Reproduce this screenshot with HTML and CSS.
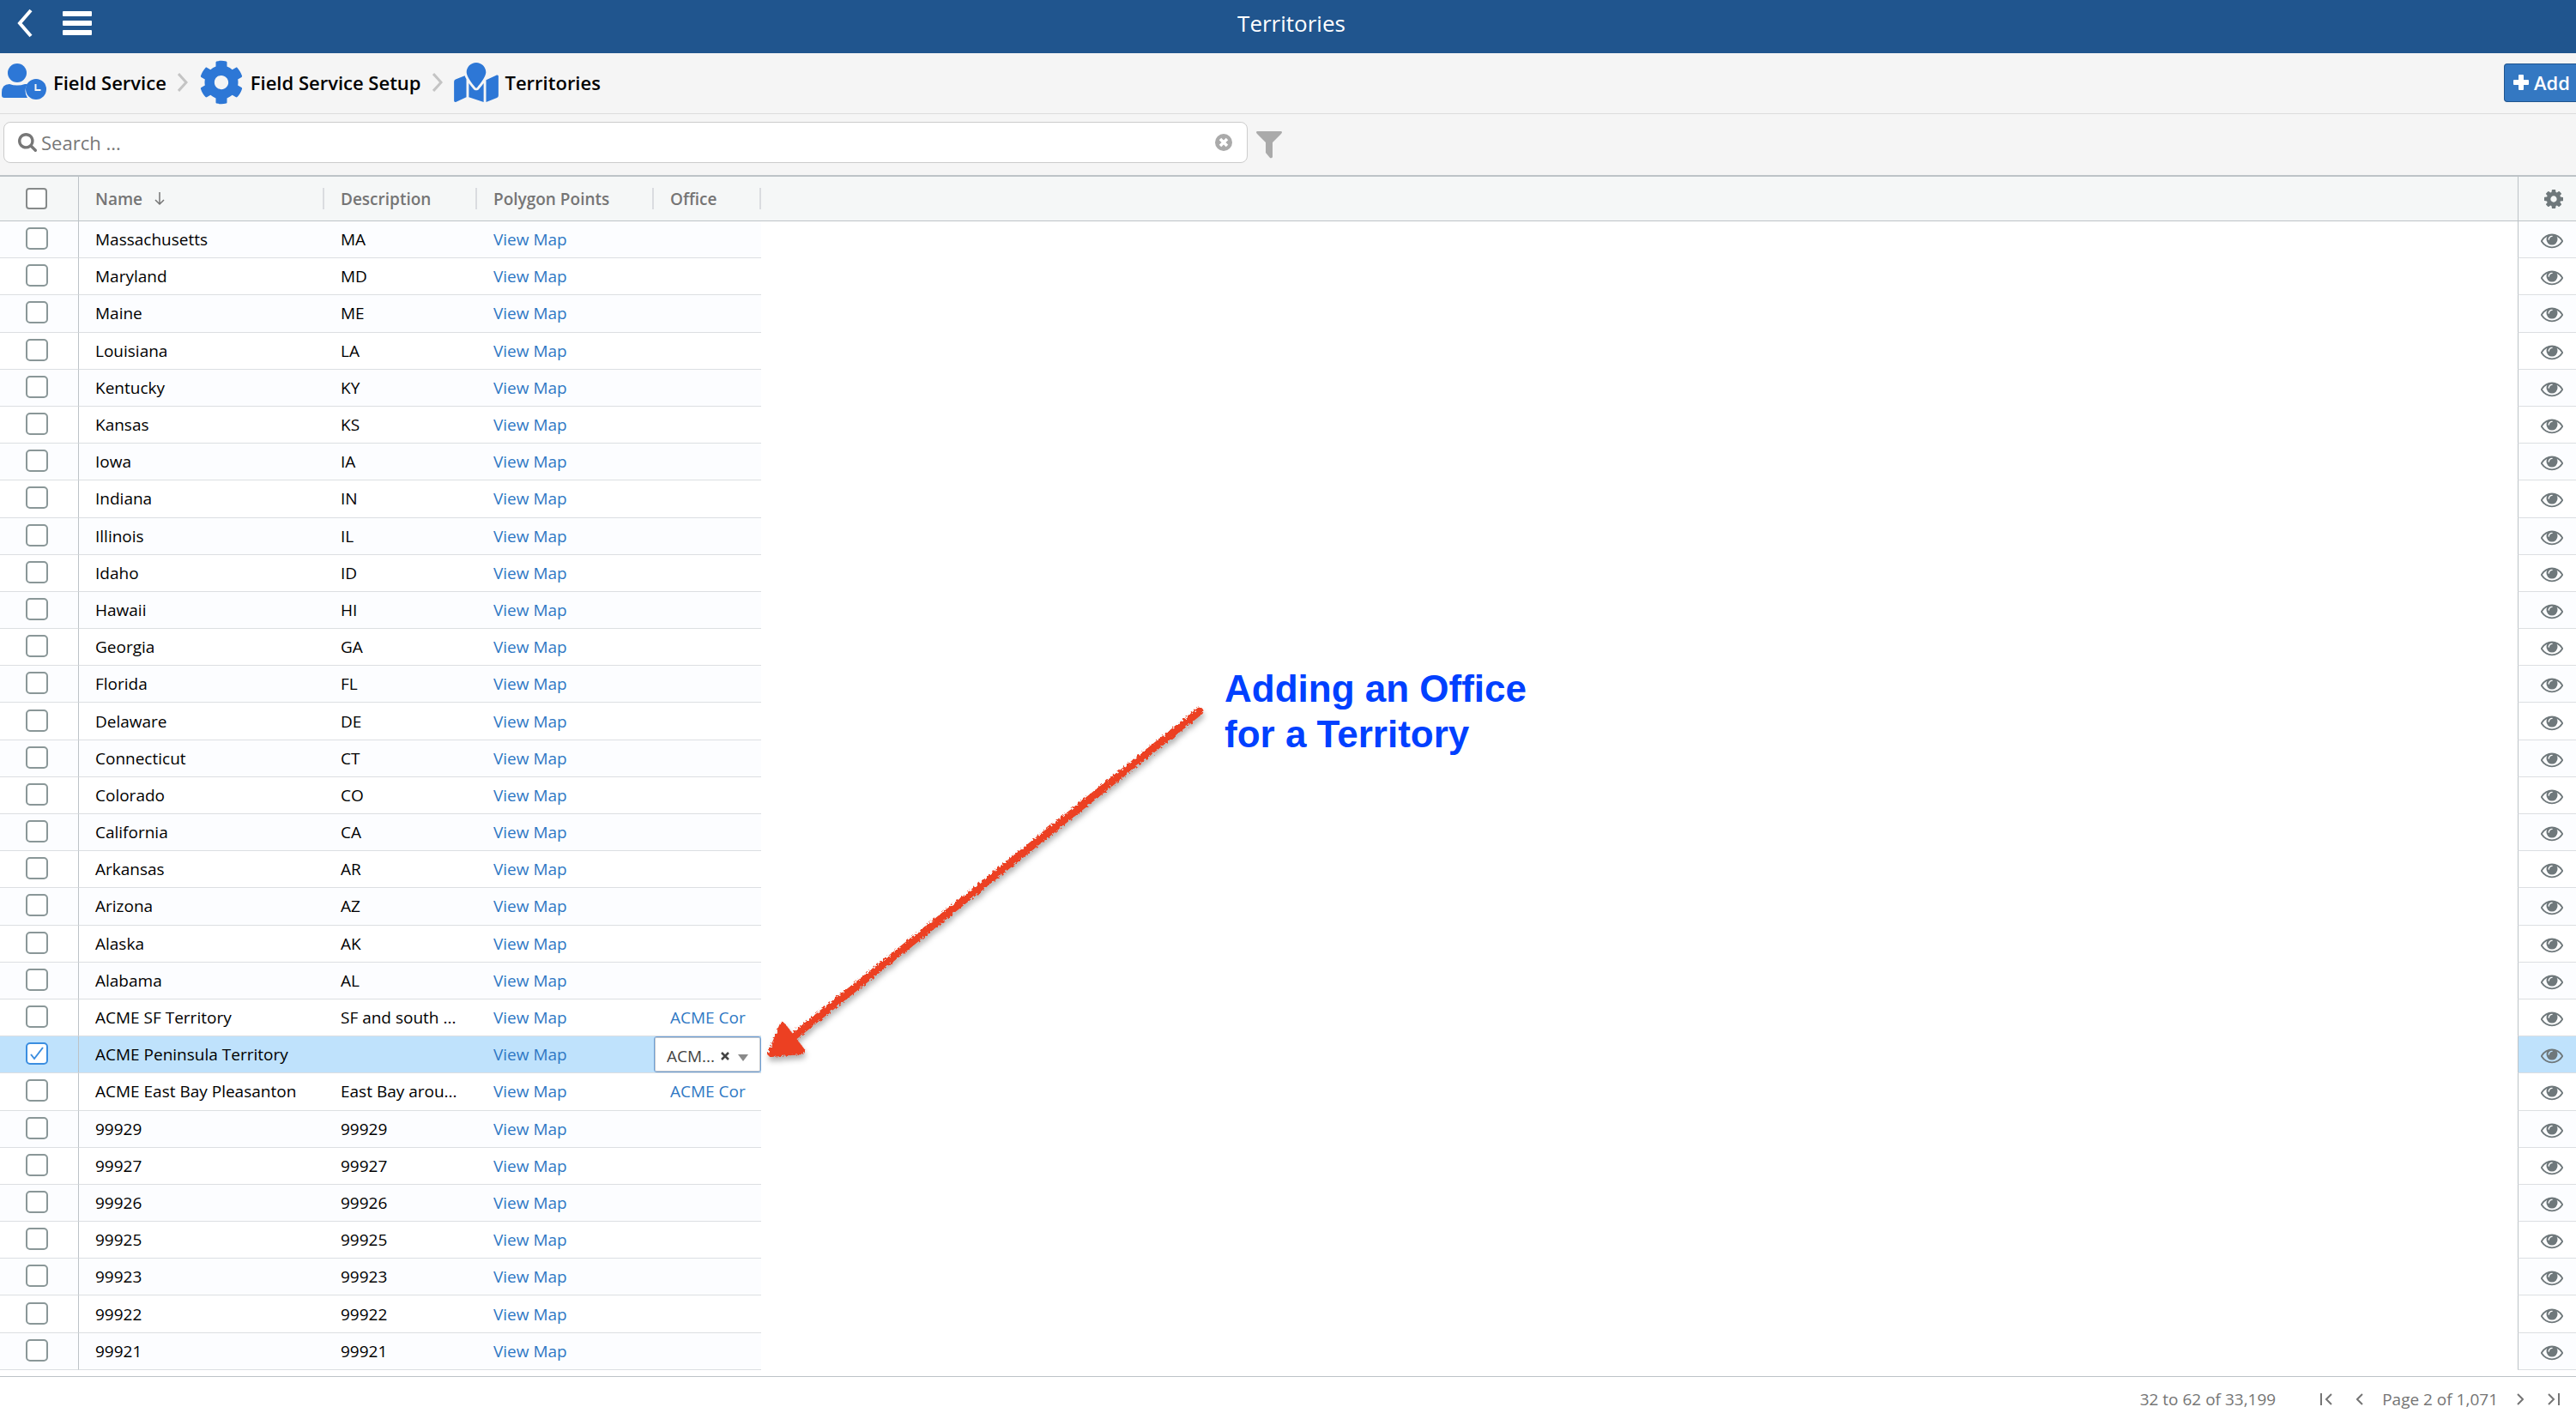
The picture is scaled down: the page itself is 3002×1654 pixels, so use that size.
FILE: index.html
```html
<!DOCTYPE html>
<html lang="en">
<head>
<meta charset="utf-8">
<title>Territories</title>
<link rel="stylesheet" href="styles.css">
</head>
<body>
<svg class="sprite" aria-hidden="true">
  <symbol id="eye" viewBox="0 0 1792 1792"><path d="M1664 960q-152-236-381-353 61 104 61 225 0 185-131.5 316.5t-316.5 131.5-316.5-131.5-131.5-316.5q0-121 61-225-229 117-381 353 133 205 333.5 326.5t434.5 121.5 434.5-121.5 333.5-326.5zm-720-384q0-20-14-34t-34-14q-125 0-214.5 89.5t-89.5 214.5q0 20 14 34t34 14 34-14 14-34q0-86 61-147t147-61q20 0 34-14t14-34zm848 384q0 34-20 69-140 230-376.5 368.5t-499.5 138.5-499.5-139-376.5-368q-20-35-20-69t20-69q140-229 376.5-368t499.5-139 499.5 139 376.5 368q20 35 20 69z"/></symbol>
</svg>
<div class="app">
  <header class="topbar">
    <div class="topbar-nav">
      <button class="icon-button" aria-label="Back"><svg width="20" height="34" viewBox="0 0 20 34"><path d="M17 2 4 17l13 15" fill="none" stroke="#fff" stroke-width="4"/></svg></button>
      <button class="icon-button" aria-label="Menu"><svg width="34" height="28" viewBox="0 0 34 28" fill="#fff"><rect width="34" height="6" rx="1"/><rect y="11" width="34" height="6" rx="1"/><rect y="22" width="34" height="6" rx="1"/></svg></button>
    </div>
    <h1 class="title">Territories</h1>
  </header>

  <div class="crumbbar">
    <nav class="crumbs" aria-label="Breadcrumb">
      <a class="crumb" href="#"><svg width="52" height="52" viewBox="0 0 52 52"><circle cx="18" cy="15" r="11"/><path d="M0 43V38q0-10 9-10 9 3 18 0h3a14 14 0 0 0 0 16H3q-3 0-3-3z"/><circle cx="40" cy="34" r="12"/><path d="M39.500 28v7h6" fill="none" stroke="#f5f5f5" stroke-width="2"/></svg>Field Service</a>
      <svg class="crumb-sep" width="12" height="22" viewBox="0 0 12 22"><path d="m1 1 9 10-9 10"/></svg>
      <a class="crumb" href="#"><svg width="52" height="52" viewBox="0 0 512 512"><path d="M487.400 315.700l-42.600-24.600c4.300-23.200 4.300-47 0-70.200l42.600-24.600c4.900-2.800 7.100-8.600 5.500-14-11.100-35.600-30-67.800-54.700-94.600-3.800-4.100-10-5.100-14.800-2.300L380.800 110c-17.900-15.400-38.500-27.300-60.800-35.100V25.800c0-5.600-3.900-10.500-9.400-11.700-36.700-8.200-74.300-7.800-109.200 0-5.500 1.200-9.400 6.100-9.400 11.700V75c-22.200 7.900-42.800 19.800-60.800 35.100L88.700 85.500c-4.900-2.800-11-1.900-14.800 2.300-24.700 26.700-43.600 58.900-54.700 94.600-1.700 5.400.6 11.200 5.500 14L67.300 221c-4.300 23.200-4.300 47 0 70.200l-42.600 24.600c-4.900 2.800-7.100 8.600-5.500 14 11.100 35.600 30 67.800 54.700 94.600 3.800 4.100 10 5.100 14.800 2.300l42.600-24.600c17.900 15.400 38.500 27.300 60.800 35.100v49.200c0 5.600 3.900 10.500 9.400 11.700 36.700 8.200 74.300 7.800 109.200 0 5.500-1.200 9.400-6.100 9.400-11.700v-49.200c22.200-7.900 42.800-19.800 60.800-35.100l42.600 24.600c4.900 2.800 11 1.900 14.800-2.300 24.700-26.700 43.600-58.900 54.700-94.600 1.500-5.500-.7-11.300-5.600-14.100zM256 336c-44.100 0-80-35.900-80-80s35.900-80 80-80 80 35.900 80 80-35.900 80-80 80z"/></svg>Field Service Setup</a>
      <svg class="crumb-sep" width="12" height="22" viewBox="0 0 12 22"><path d="m1 1 9 10-9 10"/></svg>
      <a class="crumb" href="#"><svg width="52" height="46" viewBox="0 0 576 512"><path d="M288 0c-69.590 0-126 56.410-126 126 0 56.260 82.350 158.800 113.900 196.020 6.390 7.540 17.820 7.540 24.200 0C331.650 284.800 414 182.260 414 126 414 56.410 357.590 0 288 0zM20.120 215.950A32.006 32.006 0 0 0 0 245.660v250.320c0 11.320 11.430 19.060 21.940 14.860L160 448V214.920c-8.840-15.980-16.070-31.540-21.250-46.420L20.120 215.950zM288 359.670c-14.070 0-27.380-6.180-36.510-16.960-19.660-23.200-40.570-49.620-59.490-76.720v182l192 64V266c-18.920 27.090-39.820 53.520-59.490 76.720-9.130 10.770-22.440 16.950-36.510 16.950zm266.060-198.510L416 224v288l139.880-55.950A31.996 31.996 0 0 0 576 426.340V176.020c0-11.320-11.430-19.060-21.940-14.860z"/></svg>Territories</a>
    </nav>
    <button class="add"><svg width="18" height="18" viewBox="0 0 18 18"><path d="M7 0h4q1 0 1 1v5h5q1 0 1 1v4q0 1-1 1h-5v5q0 1-1 1H7q-1 0-1-1v-5H1q-1 0-1-1V7q0-1 1-1h5V1q0-1 1-1z" fill="#fff"/></svg>Add</button>
  </div>

  <div class="filterbar">
    <label class="search">
      <svg width="22" height="22" viewBox="64 128 1664 1664"><path fill="#777" d="M1216 832q0-185-131.500-316.500t-316.500-131.500-316.500 131.500-131.500 316.500 131.500 316.500 316.500 131.500 316.500-131.500 131.500-316.500zm512 832q0 52-38 90t-90 38q-54 0-90-38l-343-342q-179 124-399 124-143 0-273.500-55.500t-225-150-150-225-55.500-273.500 55.500-273.500 150-225 225-150 273.500-55.500 273.500 55.500 225 150 150 225 55.500 273.500q0 220-124 399l343 343q37 37 37 90z"/></svg>
      <input type="text" placeholder="Search ..." aria-label="Search">
      <button class="icon-button" aria-label="Clear search"><svg width="20" height="20" viewBox="0 0 20 20"><circle cx="10" cy="10" r="10" fill="#aaa"/><path d="m6 6 8 8m0-8-8 8" stroke="#fff" stroke-width="3.500"/></svg></button>
    </label>
    <button class="icon-button filter" aria-label="Filter"><svg width="30" height="32" viewBox="0 0 30 32"><path d="M1 0h28q2 1 0 3L19 13v17q-1 2-3 1l-5-6V13L1 3Q-1 1 1 0z" fill="#aaa"/></svg></button>
  </div>

  <main class="grid-area">
    <table class="grid">
      <colgroup><col class="c-check"><col class="c-name"><col class="c-desc"><col class="c-poly"><col class="c-office"><col><col class="c-view"></colgroup>
      <thead>
        <tr>
          <th class="check"><input type="checkbox" aria-label="Select all"></th>
          <th><div class="head">Name<svg width="12" height="16" viewBox="0 0 12 16"><path d="M6 0v14M1 9l5 5 5-5" fill="none" stroke="#757575" stroke-width="1.500"/></svg></div></th>
          <th><div class="head">Description</div></th>
          <th><div class="head">Polygon Points</div></th>
          <th><div class="head">Office</div></th>
          <th></th>
          <th class="view"><button class="icon-button" aria-label="Grid settings"><svg width="22" height="22" viewBox="128 128 1536 1536"><path d="M1152 896q0-106-75-181t-181-75-181 75-75 181 75 181 181 75 181-75 75-181zm512-109v222q0 12-8 23t-20 13l-185 28q-19 54-39 91 35 50 107 138 10 12 10 25t-9 23q-27 37-99 108t-94 71q-12 0-26-9l-138-108q-44 23-91 38-16 136-29 186-7 28-36 28h-222q-14 0-24.500-8.500t-11.500-21.500l-28-184q-49-16-90-37l-141 107q-10 9-25 9-14 0-25-11-126-114-165-168-7-10-7-23 0-12 8-23 15-21 51-66.500t54-70.500q-27-50-41-99l-183-27q-13-2-21-12.500t-8-23.500v-222q0-12 8-23t19-13l186-28q14-46 39-92-40-57-107-138-10-12-10-24 0-10 9-23 26-36 98.500-107.500t94.500-71.500q13 0 26 10l138 107q44-23 91-38 16-136 29-186 7-28 36-28h222q14 0 24.500 8.500t11.500 21.500l28 184q49 16 90 37l142-107q9-9 24-9 13 0 25 10 129 119 165 170 7 8 7 22 0 12-8 23-15 21-51 66.500t-54 70.500q26 50 41 98l183 28q13 2 21 12.500t8 23.500z"/></svg></button></th>
        </tr>
      </thead>
      <tbody id="rows"></tbody>
    </table>
    <p class="note">Adding an Office<br>for a Territory</p>
    <svg class="arrow" width="540" height="440" viewBox="0 0 540 440" aria-hidden="true">
      <defs><filter id="chalk" x="-5%" y="-5%" width="110%" height="110%"><feTurbulence type="fractalNoise" baseFrequency="0.350" numOctaves="2" seed="4"/><feDisplacementMap in="SourceGraphic" scale="5"/></filter></defs>
      <g filter="url(#chalk)" fill="#ec4124" stroke="#ec4124" stroke-linejoin="round" stroke-linecap="round">
        <path d="M516 15 37 399" stroke-width="9"/>
        <path d="M30 382 17 414 52 411Z" stroke-width="8"/>
      </g>
    </svg>
  </main>

  <footer class="pager">
    <span class="range">32 to 62 of 33,199</span>
    <button class="icon-button" aria-label="First page"><svg width="14" height="14" viewBox="0 0 14 14"><path d="M1 0v14M13 1 7 7l6 6"/></svg></button>
    <button class="icon-button" aria-label="Previous page"><svg width="8" height="14" viewBox="0 0 8 14"><path d="M7 1 1 7l6 6"/></svg></button>
    <span class="page">Page 2 of 1,071</span>
    <button class="icon-button" aria-label="Next page"><svg width="8" height="14" viewBox="0 0 8 14"><path d="m1 1 6 6-6 6"/></svg></button>
    <button class="icon-button" aria-label="Last page"><svg width="14" height="14" viewBox="0 0 14 14"><path d="M13 0v14M1 1l6 6-6 6"/></svg></button>
  </footer>
</div>
<script src="rows.js"></script>
</body>
</html>
```
FILE: styles.css
```css
* { box-sizing: border-box; }

body {
  margin: 0;
  background: #fff;
  color: #000;
  font-family: "Open Sans", "Liberation Sans", sans-serif;
  font-size: 19px;
}

button, input, select { font: inherit; color: inherit; margin: 0; }
a { color: #2f78c4; text-decoration: none; }
svg { display: block; flex: none; }

.sprite { display: none; }

.app {
  display: flex;
  flex-direction: column;
  min-height: 100vh;
}

.icon-button {
  display: block;
  flex: none;
  padding: 0;
  border: 0;
  background: none;
}

/* Top bar */
.topbar {
  display: grid;
  grid-template-columns: 1fr auto 1fr;
  align-items: center;
  height: 62px;
  padding: 0 0 8px 8px;
  background: #20558e;
  color: #fff;
}

.topbar-nav { display: flex; align-items: center; gap: 34px; padding-left: 11px; }
.title { margin: 0; font-size: 26px; font-weight: 400; line-height: 36px; }

/* Breadcrumbs */
.crumbbar {
  display: flex;
  align-items: center;
  justify-content: space-between;
  height: 71px;
  padding-bottom: 2px;
  border-bottom: 1px solid #dcdcdc;
  background: #f5f5f5;
}

.crumbs { display: flex; align-items: center; gap: 13px; padding-left: 2px; }

.crumb {
  display: flex;
  align-items: center;
  gap: 8px;
  color: #000;
  font-size: 22px;
  font-weight: 600;
}

.crumb svg { fill: #2d77d6; }
.crumb-sep { fill: none; stroke: #c4c4c4; stroke-width: 3; }

.add {
  display: flex;
  align-items: center;
  gap: 6px;
  height: 45px;
  padding: 0 7px 0 10px;
  border: 1px solid #20558e;
  border-right: 0;
  border-radius: 4px 0 0 4px;
  background: #3478c2;
  color: #fff;
  font-size: 22px;
  font-weight: 600;
}

/* Search */
.filterbar {
  display: flex;
  align-items: center;
  gap: 10px;
  height: 71px;
  padding: 0 4px 6px;
  background: #f5f5f5;
}

.search {
  display: flex;
  align-items: center;
  gap: 5px;
  width: 1450px;
  max-width: 60%;
  height: 48px;
  padding: 0 17px 0 16px;
  border: 1px solid #ccc;
  border-radius: 8px;
  background: #fff;
}

.search input {
  flex: 1;
  min-width: 0;
  padding: 0;
  border: 0;
  outline: 0;
  background: none;
  font-size: 22px;
}

.search input::placeholder { color: #777; opacity: 1; }
.filter { padding-top: 6px; }

/* Grid */
.grid-area {
  position: relative;
  flex: 1;
  display: flex;
  padding-bottom: 7px;
}

.grid {
  width: 100%;
  table-layout: fixed;
  border-spacing: 0;
  border-top: 2px solid #bdc3c7;
}

.c-check { width: 92px; }
.c-name { width: 286px; }
.c-desc { width: 178px; }
.c-poly { width: 206px; }
.c-office { width: 125px; }
.c-view { width: 68px; }

.grid th {
  height: 52px;
  padding: 0;
  border-bottom: 1px solid #bdc3c7;
  background: #f5f7f7;
  color: #757575;
  font-weight: 600;
  text-align: left;
}

.head {
  display: flex;
  align-items: center;
  gap: 14px;
  height: 25px;
  padding-left: 19px;
  border-right: 2px solid #dadce0;
}

.grid td {
  height: 43px;
  padding: 0 19px;
  overflow: hidden;
  border-bottom: 1px solid #dcdfe2;
  line-height: 26px;
  white-space: nowrap;
}

.grid tbody tr:nth-child(odd) td { background: #fcfdff; }
.grid tbody tr.selected td { background: #bfe2fc; }
.grid tbody td.filler { border: 0; background: #fff !important; }

.grid .check { padding: 0 0 2px 30px; border-right: 1px solid #bdc3c7; }
.grid th.check { padding-bottom: 0; }
.grid .view { padding: 0 15px 0 0; border-left: 1px solid #bdc3c7; }
.grid td.view { padding-top: 2px; }
.grid .view .icon-button { margin-left: auto; }
.view svg { fill: #6f787b; }

.grid input[type="checkbox"] {
  display: block;
  width: 26px;
  height: 26px;
  appearance: none;
  border: 2px solid #8a9798;
  border-radius: 5px;
  background: #fff;
}

.grid th input[type="checkbox"] {
  width: 25px;
  height: 25px;
  border-color: #868a8a;
  border-radius: 4px;
}

.grid input[type="checkbox"]:checked { border-color: #3b8ee0; }

.tick { position: relative; }
.tick svg { position: absolute; left: 5px; top: 5px; pointer-events: none; }

.grid td.editing { padding: 0; }

.editor {
  display: flex;
  align-items: center;
  height: 42px;
  padding: 4px 14px 0 14px;
  border: 1px solid #6d9fd6;
  border-radius: 3px;
  background: #fff;
  box-shadow: inset 0 0 0 1px #c4c8cc;
  color: #444;
}

.editor select {
  flex: 1;
  min-width: 0;
  padding: 0;
  border: 0;
  overflow: visible;
  text-overflow: clip;
  background: none;
  appearance: none;
}

.editor > svg { margin: 4px 0 0 10px; }

/* Callout over the grid */
.note {
  position: absolute;
  left: 1427px;
  top: 572px;
  margin: 0;
  color: #0040ff;
  font: bold 44px/53px "Liberation Sans", Arial, sans-serif;
}

.arrow {
  position: absolute;
  left: 882px;
  top: 610px;
  filter: drop-shadow(1px 5px 3px rgba(0, 0, 0, 0.3));
}

/* Pager */
.pager {
  display: flex;
  align-items: center;
  justify-content: flex-end;
  height: 50px;
  padding: 2px 19px 0 0;
  border-top: 1px solid #bdc3c7;
  color: #757575;
}

.pager svg { fill: none; stroke: #757575; stroke-width: 2; }
.range { margin-right: 52px; }
.pager .icon-button + .icon-button { margin-left: 28px; }
.page { margin: 0 22px; }
```
FILE: rows.js
```js
const territories = [
  ["Massachusetts", "MA"], ["Maryland", "MD"], ["Maine", "ME"], ["Louisiana", "LA"],
  ["Kentucky", "KY"], ["Kansas", "KS"], ["Iowa", "IA"], ["Indiana", "IN"],
  ["Illinois", "IL"], ["Idaho", "ID"], ["Hawaii", "HI"], ["Georgia", "GA"],
  ["Florida", "FL"], ["Delaware", "DE"], ["Connecticut", "CT"], ["Colorado", "CO"],
  ["California", "CA"], ["Arkansas", "AR"], ["Arizona", "AZ"], ["Alaska", "AK"],
  ["Alabama", "AL"],
  ["ACME SF Territory", "SF and south ...", "ACME Cor"],
  ["ACME Peninsula Territory", "", "ACM...", true],
  ["ACME East Bay Pleasanton", "East Bay arou...", "ACME Cor"],
  ["99929", "99929"], ["99927", "99927"], ["99926", "99926"], ["99925", "99925"],
  ["99923", "99923"], ["99922", "99922"], ["99921", "99921"],
];

const tick = '<svg width="16" height="16" viewBox="0 0 16 16"><path d="m1 9 4 5L15 1" fill="none" stroke="#3b8ee0" stroke-width="2"/></svg>';

const editor = (value) => `<td class="editing"><div class="editor">
  <select aria-label="Office"><option>${value}</option></select>
  <button class="icon-button" aria-label="Clear office"><svg width="10" height="10" viewBox="0 0 10 10"><path d="m1 1 8 8m0-8-8 8" stroke="#444" stroke-width="2.500"/></svg></button>
  <svg width="12" height="8" viewBox="0 0 12 8"><path d="M0 0h12L6 8z" fill="#8a8a8a"/></svg>
</div></td>`;

document.getElementById("rows").innerHTML = territories.map(([name, desc, office, selected]) => `
<tr${selected ? ' class="selected"' : ""}>
  <td class="check"><div class="tick"><input type="checkbox" aria-label="Select ${name}"${selected ? " checked" : ""}>${selected ? tick : ""}</div></td>
  <td>${name}</td>
  <td>${desc}</td>
  <td><a href="#">View Map</a></td>
  ${selected ? editor(office) : `<td>${office ? `<a href="#">${office}</a>` : ""}</td>`}
  <td class="filler"></td>
  <td class="view"><button class="icon-button" aria-label="View ${name}"><svg width="26" height="26"><use href="#eye"/></svg></button></td>
</tr>`).join("");
```
